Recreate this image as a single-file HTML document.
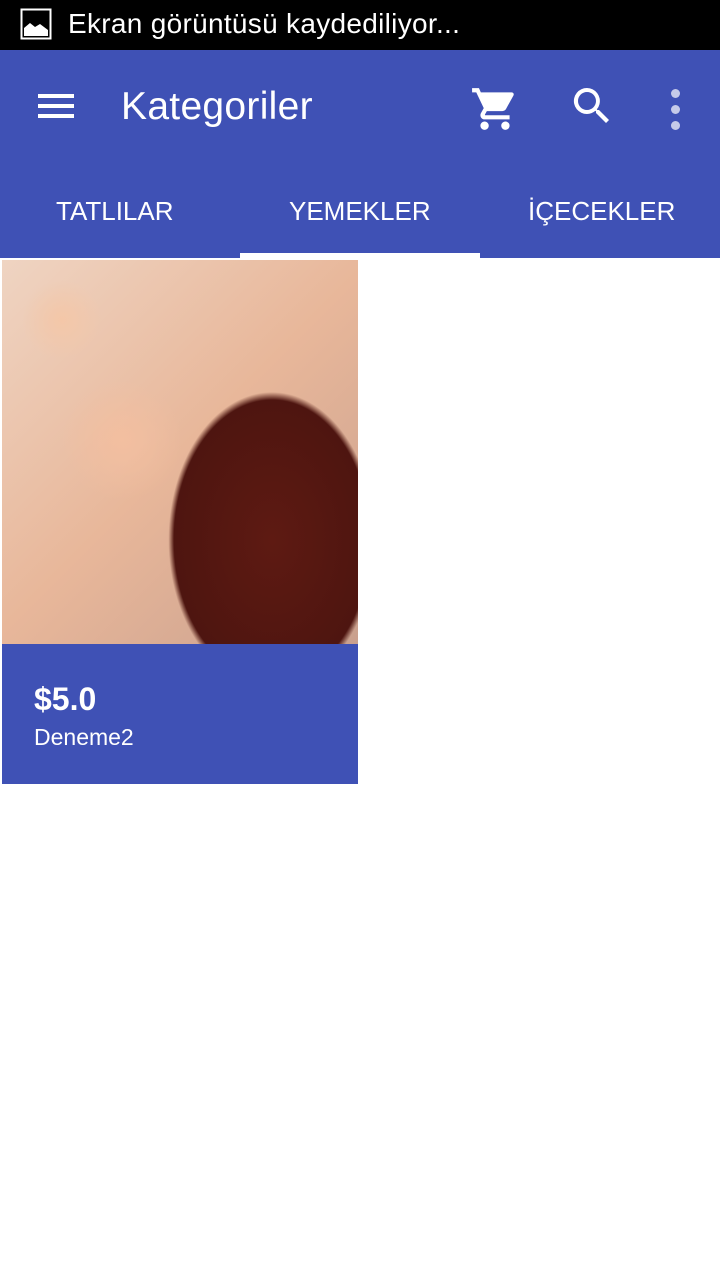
<!DOCTYPE html>
<html><head><style>
body{margin:0;width:720px;height:1280px;background:#fff;font-family:"Liberation Sans",sans-serif;position:relative;overflow:hidden}
.sb{position:absolute;top:0;left:0;width:720px;height:50px;background:#000;color:#fff;font-size:28px}
.ab{position:absolute;top:50px;left:0;width:720px;height:208px;background:#3f51b5;color:#fff}
.t{position:absolute;font-size:26px;top:196px}
.img{position:absolute;left:2px;top:260px;width:356px;height:384px;overflow:hidden;
background:radial-gradient(ellipse 140px 200px at 270px 280px,#5e1a12 0%,#4e1510 70%,transparent 74%),
radial-gradient(circle 40px at 60px 60px,#f4c7a8,transparent),radial-gradient(circle 50px at 90px 440px,#f2c4a8,transparent),
radial-gradient(circle 60px at 120px 180px,#f3bfa0,transparent),linear-gradient(135deg,#efd4c2,#e8b79a 50%,#c9a08e)}
.card{position:absolute;left:2px;top:644px;width:356px;height:140px;background:#3f51b5;color:#fff}
</style></head><body>
<div class="sb">
<svg style="position:absolute;left:20px;top:8px" width="32" height="32" viewBox="0 0 32 32"><rect x="1.5" y="1.5" width="29" height="29" fill="none" stroke="#fff" stroke-width="2"/><path d="M4 28V20l6-5 5 4 5-3 8 6v6z" fill="#fff"/></svg>
<div style="position:absolute;left:68px;top:8px;letter-spacing:0.3px">Ekran görüntüsü kaydediliyor...</div></div>
<div class="ab">
<div style="position:absolute;left:38px;top:44px;width:36px;height:4px;background:#fff;box-shadow:0 10px 0 #fff,0 20px 0 #fff"></div>
<div style="position:absolute;left:121px;top:35px;font-size:39px;letter-spacing:0.3px">Kategoriler</div>
<svg style="position:absolute;left:470px;top:34px" width="50" height="50" viewBox="0 0 24 24"><path fill="#fff" d="M7 18c-1.1 0-2 .9-2 2s.9 2 2 2 2-.9 2-2-.9-2-2-2zM1 2v2h2l3.6 7.6-1.35 2.4C5.1 14.3 5 14.6 5 15c0 1.1.9 2 2 2h12v-2H7.4c-.1 0-.25-.1-.25-.25l.03-.12.9-1.63h7.45c.75 0 1.4-.4 1.75-1l3.58-6.5A1 1 0 0 0 20 4H5.2l-.9-2zM17 18c-1.1 0-2 .9-2 2s.9 2 2 2 2-.9 2-2-.9-2-2-2z"/></svg>
<svg style="position:absolute;left:568px;top:32px" width="48" height="48" viewBox="0 0 24 24"><path fill="#fff" d="M15.5 14h-.8l-.3-.3A6.5 6.5 0 1 0 9.5 16a6.5 6.5 0 0 0 4.2-1.6l.3.3v.8l5 5 1.5-1.5-5-5zm-6 0C7 14 5 12 5 9.5S7 5 9.5 5 14 7 14 9.5 12 14 9.5 14z"/></svg>
<div style="position:absolute;left:671px;top:39px;width:9px;height:9px;border-radius:50%;background:#c5cae9;box-shadow:0 16px 0 #c5cae9,0 32px 0 #c5cae9"></div>
<div class="t" style="left:56px;top:146px">TATLILAR</div>
<div class="t" style="left:289px;top:146px">YEMEKLER</div>
<div class="t" style="left:528px;top:146px">İÇECEKLER</div>
<div style="position:absolute;left:240px;top:203px;width:240px;height:5px;background:#fff"></div>
</div>
<div class="img"></div>
<div class="card">
<div style="position:absolute;left:32px;top:37px;font-size:32px;font-weight:bold">$5.0</div>
<div style="position:absolute;left:32px;top:80px;font-size:23px">Deneme2</div>
</div>
</body></html>
